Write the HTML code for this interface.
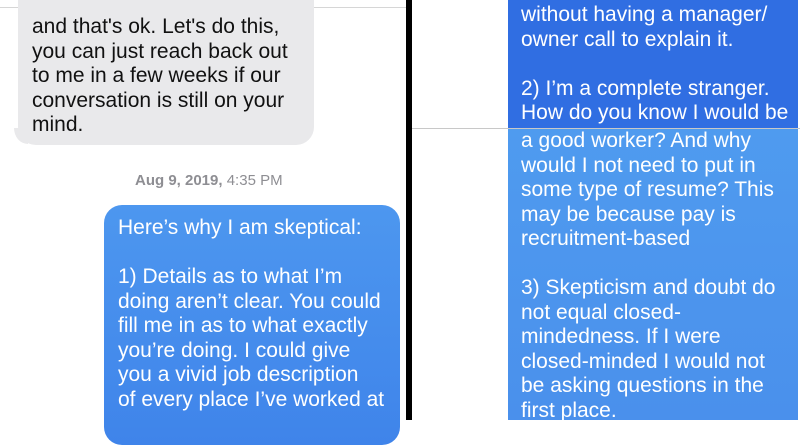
<!DOCTYPE html>
<html><head><style>
*{margin:0;padding:0;box-sizing:border-box}
body{width:800px;height:420px;overflow:hidden;background:#fff;position:relative;font-family:"Liberation Sans",sans-serif}
.abs{position:absolute}
.t{font-size:21px;line-height:24.5px;white-space:pre}
</style></head><body>
<div class="abs" style="left:0;top:7px;width:406px;height:1px;background:#d6d6d6"></div>
<div class="abs" style="left:18px;top:-20px;width:296px;height:165px;background:#e9e9eb;border-radius:18px"></div>
<div class="abs" style="left:14px;top:128px;width:14px;height:16px;background:#e9e9eb;border-bottom-left-radius:14px 16px"></div>
<div class="abs t" style="left:32px;top:15px;color:#111">and that's ok. Let's do this,
you can just reach back out
to me in a few weeks if our
conversation is still on your
mind.</div>
<div class="abs" style="left:135px;top:172px;font-size:15px;color:#8e8e93"><b>Aug 9, 2019,</b> 4:35 PM</div>
<div class="abs" style="left:104px;top:205px;width:296px;height:240px;background:linear-gradient(#4d97ef,#3f84ea);border-radius:18px"></div>
<div class="abs t" style="left:118px;top:216px;color:#fff">Here’s why I am skeptical:

1) Details as to what I’m
doing aren’t clear. You could
fill me in as to what exactly
you’re doing. I could give
you a vivid job description
of every place I’ve worked at</div>
<div class="abs" style="left:406px;top:0;width:6px;height:420px;background:#000"></div>
<div class="abs" style="left:508px;top:0;width:290px;height:128px;background:#306ee2"></div>
<div class="abs" style="left:412px;top:128px;width:388px;height:1px;background:#c8c8c8"></div>
<div class="abs" style="left:508px;top:129px;width:290px;height:291px;background:linear-gradient(#4f9bef,#4a90ec)"></div>
<div class="abs t" style="left:521px;top:3px;color:#fff">without having a manager/
owner call to explain it.

2) I’m a complete stranger.
How do you know I would be</div>
<div class="abs t" style="left:521px;top:129px;color:#fff">a good worker? And why
would I not need to put in
some type of resume? This
may be because pay is
recruitment-based

3) Skepticism and doubt do
not equal closed-
mindedness. If I were
closed-minded I would not
be asking questions in the
first place.</div>
</body></html>
